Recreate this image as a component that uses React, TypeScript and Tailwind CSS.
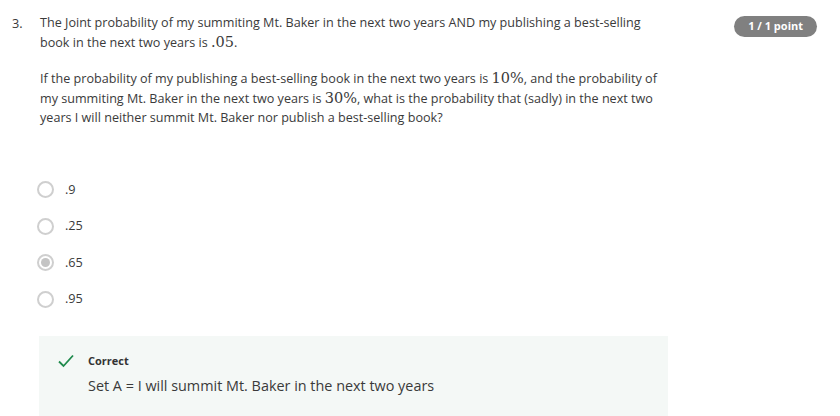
import React from "react";

const M = ({ children }: { children: React.ReactNode }) => (
  <span className="text-[14.5px] leading-none" style={{ fontFamily: '"DejaVu Serif", "Liberation Serif", serif' }}>{children}</span>
);

function Radio({ label, checked }: { label: string; checked?: boolean }) {
  return (
    <div className="flex items-center h-[18px]">
      <div className="w-[17px] h-[17px] ml-[37px] rounded-full border-[2px] border-[#cfcfcf] flex items-center justify-center">
        {checked && <div className="w-[9px] h-[9px] rounded-full bg-[#c4c4c4]" />}
      </div>
      <span className="ml-[11px] text-[12.7px] text-[#3a3a3a]">{label}</span>
    </div>
  );
}

export default function App() {
  return (
    <div className="w-[840px] h-[416px] bg-white overflow-hidden relative" style={{ fontFamily: '"Open Sans", sans-serif' }}>
      <div className="flex pt-[13px]">
        <div className="w-[40px] pl-[12px] text-[12.7px] leading-[20px] text-[#3a3a3a]">3.</div>
        <div className="w-[620px] text-[12.6px] leading-[20px] text-[#3a3a3a]">
          <p>The Joint probability of my summiting Mt. Baker in the next two years AND my publishing a best-selling book in the next two years is <M>.05</M>.</p>
          <p className="mt-[16px] leading-[19.5px]">
            If the probability of my publishing a best-selling book in the next two years is <M>10%</M>, and the probability of my summiting Mt. Baker in the next two years is <M>30%</M>, what is the probability that (sadly) in the next two years I will neither summit Mt. Baker nor publish a best-selling book?
          </p>
        </div>
        <div className="ml-auto mr-[23px] mt-[3px]">
          <div className="h-[21px] px-[14px] rounded-full bg-[#808080] text-white text-[11px] font-bold flex items-center">1 / 1 point</div>
        </div>
      </div>
      <div className="mt-[53px] flex flex-col gap-[18.5px]">
        <Radio label=".9" />
        <Radio label=".25" />
        <Radio label=".65" checked />
        <Radio label=".95" />
      </div>
      <div className="mt-[28px] ml-[39px] w-[629px] h-[100px] bg-[#f4f8f6] pt-[17px] pl-[19px]">
        <div className="flex items-center">
          <svg width="16" height="14" viewBox="0 0 16 14" className="mr-[14px]">
            <path d="M1 7.5 L5.5 12 L15 1.5" fill="none" stroke="#1f8a4c" strokeWidth="1.8" />
          </svg>
          <span className="text-[11px] font-bold text-[#333]">Correct</span>
        </div>
        <div className="ml-[30px] mt-[5px] text-[14.4px] text-[#3a3a3a]" style={{ fontFamily: '"Open Sans", sans-serif' }}>
          Set A = I will summit Mt. Baker in the next two years
        </div>
      </div>
    </div>
  );
}
